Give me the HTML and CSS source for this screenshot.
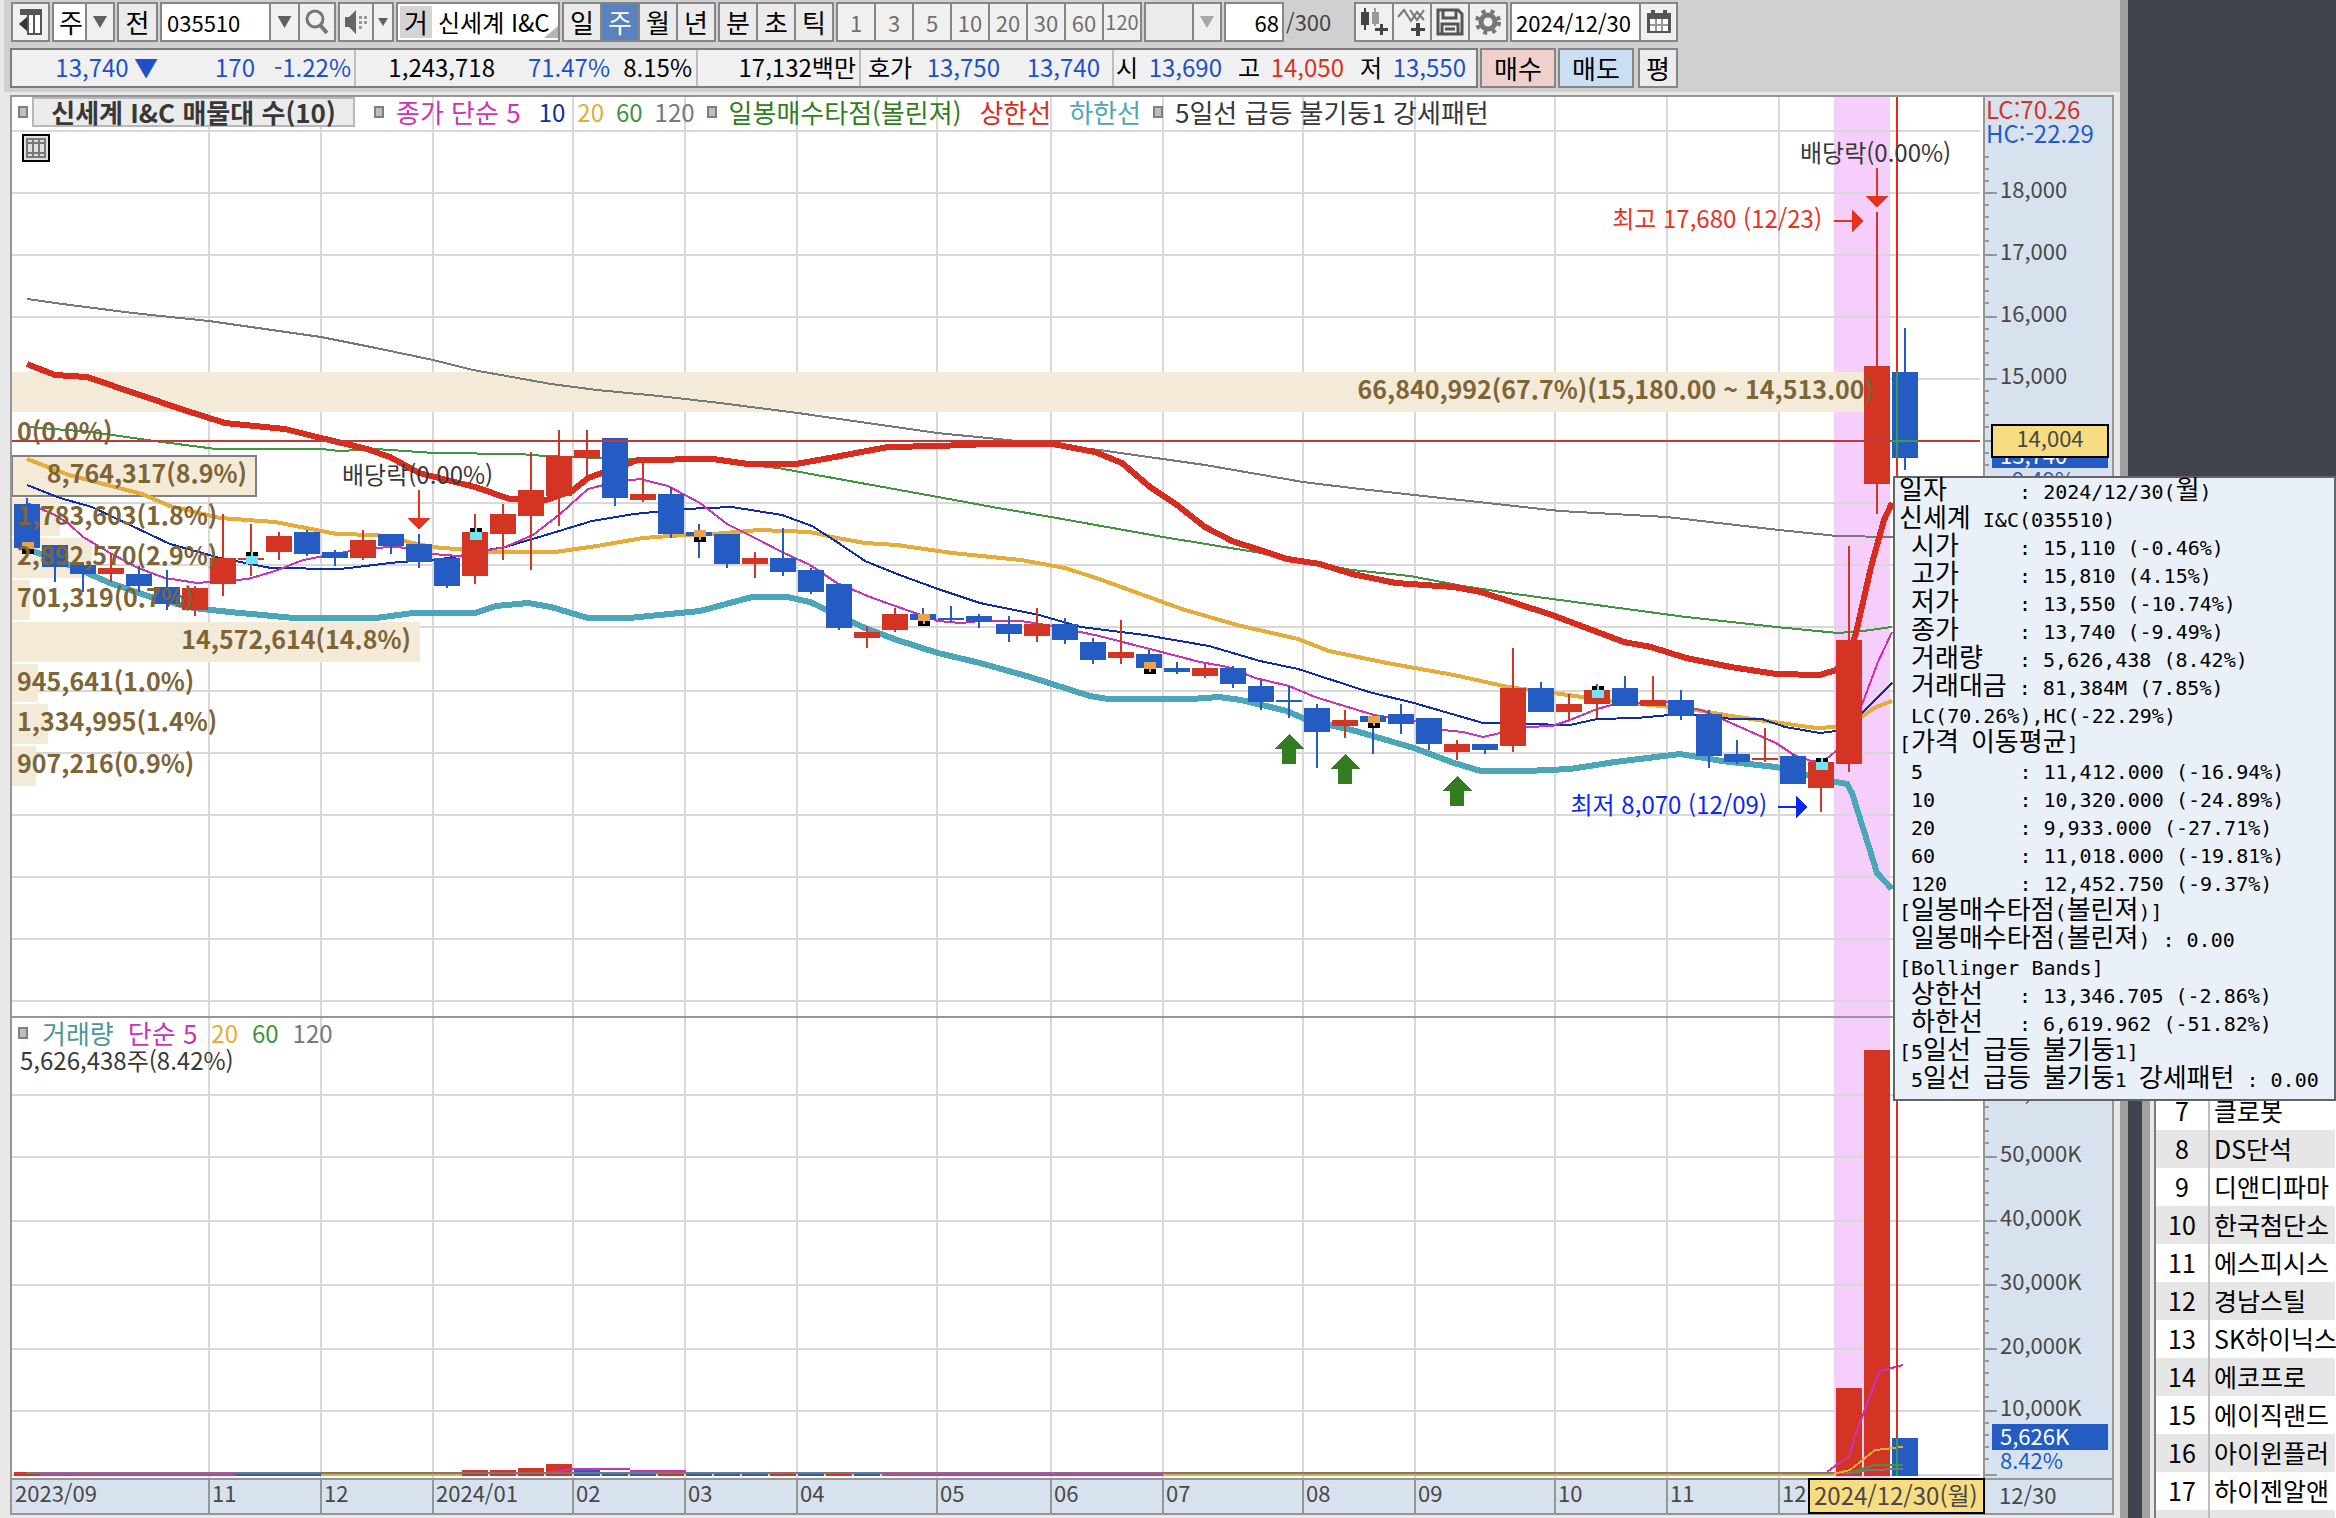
FILE: index.html
```html
<!DOCTYPE html>
<html lang="ko">
<head>
    <meta charset="UTF-8">
    <meta name="viewport" content="width=device-width, initial-scale=1.0">
    <title>신세계 I&amp;C 주봉 차트</title>
    <link rel="stylesheet" href="styles.css">
</head>
<body>
    <div class="desktop">
        <main class="window">
            <div class="toolbar">
                <div class="group w-icon">
                    <button type="button" aria-label="패널 접기">
                        <svg width="26" height="28" viewBox="0 0 26 28"><path d="M2 1h22v26H9V7H2z" fill="#555"/><path d="M11 7h4v18h-4zM17 7h5v18h-5z" fill="#fff"/><path d="M9 9v14L1 16z" fill="#333"/></svg>
                    </button>
                </div>
                <div class="group w-period">
                    <select class="period" aria-label="주기"><option>주</option></select>
                    <span class="arrow"></span>
                </div>
                <div class="group w-prev"><button type="button" class="flat">전</button></div>
                <div class="group w-code">
                    <input class="code" type="text" value="035510" aria-label="종목코드">
                    <button type="button" class="drop" aria-label="종목 목록"><span class="arrow"></span></button>
                    <button type="button" aria-label="종목 검색">
                        <svg width="26" height="26" viewBox="0 0 26 26" fill="none" stroke="#777"><circle cx="11" cy="10" r="8" stroke-width="3"/><path d="M16 16l7 8" stroke-width="4"/></svg>
                    </button>
                </div>
                <div class="group w-sound">
                    <button type="button" aria-label="소리">
                        <svg width="26" height="26" viewBox="0 0 26 26" fill="#666"><path d="M2 8h4l7-7v24l-7-7H2z"/><path d="M16 7h3v3h-3zM21 7h3v3h-3zM16 12h3v3h-3zM21 12h3v3h-3zM16 17h3v3h-3z" fill="#999"/></svg>
                    </button>
                    <button type="button" class="mini" aria-label="소리 설정"><span class="arrow small"></span></button>
                </div>
                <div class="group w-name">
                    <span class="market">거</span>
                    <span class="name">신세계 I&amp;C</span>
                </div>
                <div class="group w-four">
                    <button type="button" class="flat">일</button>
                    <button type="button" class="flat active">주</button>
                    <button type="button" class="flat">월</button>
                    <button type="button" class="flat">년</button>
                </div>
                <div class="group w-three">
                    <button type="button" class="flat">분</button>
                    <button type="button" class="flat">초</button>
                    <button type="button" class="flat">틱</button>
                </div>
                <div class="group w-minutes">
                    <button type="button" disabled>1</button>
                    <button type="button" disabled>3</button>
                    <button type="button" disabled>5</button>
                    <button type="button" disabled>10</button>
                    <button type="button" disabled>20</button>
                    <button type="button" disabled>30</button>
                    <button type="button" disabled>60</button>
                    <button type="button" disabled>120</button>
                </div>
                <div class="group w-custom">
                    <select class="custom" aria-label="사용자 주기" disabled><option></option></select>
                    <span class="arrow dim"></span>
                </div>
                <div class="group w-count"><input class="count" type="text" value="68" aria-label="표시 봉 개수"></div>
                <span class="total">/300</span>
                <div class="group w-four">
                    <button type="button" aria-label="차트 추가">
                        <svg width="32" height="30" viewBox="0 0 32 30" fill="#444"><path d="M3 5h8v13H3zM6 1h2v22H6z"/><path d="M14 5h7v12h-7zM16 1h2v18h-2z" fill="#999"/><path d="M22 17h3v4h5v3h-5v4h-3v-4h-5v-3h5z"/></svg>
                    </button>
                    <button type="button" aria-label="지표 추가">
                        <svg width="32" height="30" viewBox="0 0 32 30" fill="#444"><path d="M2 10l6-7 7 11 6-9 7 8M14 3l7 10 7-10" fill="none" stroke="#777" stroke-width="2"/><path d="M20 16h4v5h5v3h-5v5h-4v-5h-5v-3h5z"/></svg>
                    </button>
                    <button type="button" aria-label="저장">
                        <svg width="28" height="28" viewBox="0 0 28 28" fill="none" stroke="#555" stroke-width="3"><path d="M2 2h20l4 4v20H2z"/><path d="M7 2v8h13V2M6 26V16h16v10M9 21h10"/></svg>
                    </button>
                    <button type="button" aria-label="설정">
                        <svg width="28" height="28" viewBox="0 0 28 28" fill="none" stroke="#777"><circle cx="14" cy="14" r="7" stroke-width="5"/><circle cx="14" cy="14" r="11" stroke-width="4" stroke-dasharray="4 5"/></svg>
                    </button>
                </div>
                <div class="group w-date">
                    <input class="date" type="text" value="2024/12/30" aria-label="기준일">
                    <button type="button" aria-label="달력">
                        <svg width="26" height="24" viewBox="0 0 26 24"><path d="M1 3h24v20H1z" fill="#555"/><path d="M4 9h18v12H4z" fill="#fff"/><path d="M10 9v12M16 9v12M4 15h18" stroke="#999" stroke-width="2"/><path d="M5 0h4v4H5zM17 0h4v4h-4z" fill="#555"/></svg>
                    </button>
                </div>
            </div>

            <div class="quote">
                <div class="quote-box">
                    <div class="cell c-price down"><span>13,740 ▼</span><span>170</span><span>-1.22%</span></div>
                    <div class="cell c-volume"><span>1,243,718</span><span class="down">71.47%</span><span>8.15%</span></div>
                    <div class="cell c-amount"><span>17,132백만</span></div>
                    <div class="cell c-bid"><b>호가</b><span class="down">13,750</span><span class="down">13,740</span></div>
                    <div class="cell c-ohl"><b>시</b><span class="down">13,690</span><b>고</b><span class="up">14,050</span><b>저</b><span class="down">13,550</span></div>
                </div>
                <button type="button" class="order buy">매수</button>
                <button type="button" class="order sell">매도</button>
                <button type="button" class="order avg">평</button>
            </div>

            <section class="chart">
                <div class="pane price-pane">
                    <svg id="price" viewBox="12 97 1971 919" preserveAspectRatio="none"></svg>
                    <div class="legend">
                        <i></i><strong>신세계 I&amp;C 매물대 수(10)</strong>
                        <i></i><span class="ma5">종가 단순 5</span><span class="ma10">10</span><span class="ma20">20</span><span class="ma60">60</span><span class="ma120">120</span>
                        <i></i><span class="signal">일봉매수타점(볼린져)</span><span class="upper">상한선</span><span class="lower">하한선</span>
                        <i></i><span>5일선 급등 불기둥1 강세패턴</span>
                    </div>
                    <button type="button" class="grid-toggle" aria-label="데이터 표">
                        <svg width="20" height="20" viewBox="0 0 20 20" fill="none" stroke="#777" stroke-width="2"><path d="M1 1h18v18H1zM1 5h18M1 15h18M7 1v18M13 1v18"/></svg>
                    </button>
                </div>
                <svg id="priceAxis" class="axis" viewBox="1985 97 127 919" preserveAspectRatio="none"></svg>

                <div class="pane volume-pane">
                    <svg id="volume" viewBox="12 1018 1971 460" preserveAspectRatio="none"></svg>
                    <div class="legend volume-legend">
                        <i></i><span class="vol">거래량</span><span class="ma5">단순 5</span><span class="ma20">20</span><span class="ma60">60</span><span class="ma120">120</span>
                    </div>
                    <div class="volume-now">5,626,438주(8.42%)</div>
                </div>
                <svg id="volumeAxis" class="axis" viewBox="1985 1018 127 460" preserveAspectRatio="none"></svg>

                <div class="pane time-pane">
                    <svg id="time" viewBox="12 1480 1971 33" preserveAspectRatio="none"></svg>
                    <div class="time-now">2024/12/30(월)</div>
                </div>
                <div class="axis time-end">12/30</div>
            </section>
        </main>

        <aside class="side">
            <div class="list">
                <table>
                    <tbody>
                        <tr><td>7</td><td>클로봇</td></tr>
                        <tr><td>8</td><td>DS단석</td></tr>
                        <tr><td>9</td><td>디앤디파마</td></tr>
                        <tr><td>10</td><td>한국첨단소</td></tr>
                        <tr><td>11</td><td>에스피시스</td></tr>
                        <tr><td>12</td><td>경남스틸</td></tr>
                        <tr><td>13</td><td>SK하이닉스</td></tr>
                        <tr><td>14</td><td>에코프로</td></tr>
                        <tr><td>15</td><td>에이직랜드</td></tr>
                        <tr><td>16</td><td>아이윈플러</td></tr>
                        <tr><td>17</td><td>하이젠알앤</td></tr>
                        <tr class="last"><td></td><td></td></tr>
                    </tbody>
                </table>
            </div>
        </aside>

        <div class="tooltip"><p><b>일자</b>      : 2024/12/30(<b>월</b>)</p>
<p><b>신세계</b> I&amp;C(035510)</p>
<p> <b>시가</b>     : 15,110 (-0.46%)</p>
<p> <b>고가</b>     : 15,810 (4.15%)</p>
<p> <b>저가</b>     : 13,550 (-10.74%)</p>
<p> <b>종가</b>     : 13,740 (-9.49%)</p>
<p> <b>거래량</b>   : 5,626,438 (8.42%)</p>
<p> <b>거래대금</b> : 81,384M (7.85%)</p>
<p> LC(70.26%),HC(-22.29%)</p>
<p>[<b>가격</b> <b>이동평균</b>]</p>
<p> 5        : 11,412.000 (-16.94%)</p>
<p> 10       : 10,320.000 (-24.89%)</p>
<p> 20       : 9,933.000 (-27.71%)</p>
<p> 60       : 11,018.000 (-19.81%)</p>
<p> 120      : 12,452.750 (-9.37%)</p>
<p>[<b>일봉매수타점</b>(<b>볼린져</b>)]</p>
<p> <b>일봉매수타점</b>(<b>볼린져</b>) : 0.00</p>
<p>[Bollinger Bands]</p>
<p> <b>상한선</b>   : 13,346.705 (-2.86%)</p>
<p> <b>하한선</b>   : 6,619.962 (-51.82%)</p>
<p>[5<b>일선</b> <b>급등</b> <b>불기둥</b>1]</p>
<p> 5<b>일선</b> <b>급등</b> <b>불기둥</b>1 <b>강세패턴</b> : 0.00</p></div>
    </div>
    <script src="chart.js"></script>
</body>
</html>
```
FILE: styles.css
```css
* {
    box-sizing: border-box;
}
body {
    margin: 0;
    font-family: "Noto Sans CJK KR", sans-serif;
    font-size: 26px;
    line-height: 28px;
    color: #000;
    background-color: #42444c;
}
button, input, select {
    font: inherit;
    color: inherit;
    margin: 0;
    padding: 0;
    border: 0;
    border-radius: 0;
}
svg {
    display: block;
}
.desktop {
    position: relative;
    display: flex;
    height: 100vh;
    overflow: hidden;
}
.window {
    flex: 1;
    min-width: 0;
    display: flex;
    flex-direction: column;
    padding: 0 6px 3px 0;
    background-color: #e8e8e8;
    border-right: 8px solid #a0a0a0;
}

/* toolbar */
.toolbar {
    display: flex;
    gap: 2px;
    margin: 0 -6px 0 4px;
    padding: 2px 0 0 7px;
    height: 46px;
    background-color: #d0d0d0;
}
.group {
    position: relative;
    display: flex;
    flex: none;
    height: 40px;
    border: 2px solid #868686;
    background-color: #fff;
}
.group button {
    flex: 1 1 0;
    min-width: 0;
    display: flex;
    align-items: center;
    justify-content: center;
    white-space: nowrap;
    background-color: #f0f0f0;
}
.group > * + * {
    border-left: 2px solid #868686;
}
.group .flat {
    background-color: #ebebeb;
}
.group .active {
    background-color: #5a82be;
    color: #fff;
}
.group button:disabled {
    color: #707070;
    font-size: 22px;
}
.group button:disabled:last-child {
    font-size: 20px;
}
.group input {
    min-width: 0;
    background-color: #fff;
}
.group .drop {
    flex: 0 0 29px;
}
.group .mini {
    flex: 0 0 20px;
}
.arrow {
    width: 14px;
    height: 12px;
    background-color: #606060;
    clip-path: polygon(0 0, 100% 0, 50% 100%);
}
.arrow.small {
    width: 10px;
    height: 8px;
}
.arrow.dim {
    background-color: #a8a8a8;
}
.group > .arrow {
    position: absolute;
    right: 6px;
    top: 12px;
    border: 0;
    pointer-events: none;
}
.period, .custom {
    appearance: none;
    width: 100%;
    padding-left: 5px;
    opacity: 1;
    background: linear-gradient(#868686, #868686) right 26px top / 2px 100% no-repeat, linear-gradient(#f0f0f0, #f0f0f0) right / 26px 100% no-repeat, #fff;
}
.custom {
    background-color: #ebebeb;
}
.w-icon { width: 39px; }
.w-period { width: 63px; }
.w-prev { width: 41px; }
.w-code { width: 176px; }
.w-sound { width: 56px; }
.w-name { width: 164px; }
.w-four { width: 154px; }
.w-three { width: 116px; }
.w-minutes { width: 306px; }
.w-custom { width: 78px; }
.w-count { width: 60px; }
.w-date { width: 168px; }
.code, .count, .date {
    font-size: 22px;
}
.code {
    width: 107px;
    padding-left: 5px;
}
.count {
    width: 100%;
    text-align: right;
    padding-right: 3px;
}
.date {
    width: 127px;
    padding-left: 4px;
}
.total {
    width: 66px;
    font-size: 22px;
    line-height: 38px;
    color: #444;
}
.market {
    margin: 2px;
    width: 32px;
    line-height: 32px;
    text-align: center;
    background-color: #d4d4d4;
}
.group > .name {
    border: 0;
    padding-left: 4px;
    font-size: 24px;
    line-height: 36px;
    white-space: nowrap;
}
.w-name::after {
    content: "";
    position: absolute;
    right: 0;
    bottom: 2px;
    border-left: 14px solid transparent;
    border-bottom: 12px solid #b4b4b4;
}

/* quote line */
.quote {
    display: flex;
    gap: 2px;
    margin: 0 -6px 0 4px;
    padding: 2px 0 0 6px;
    height: 46px;
    background-color: #d0d0d0;
}
.quote-box {
    display: flex;
    width: 1468px;
    height: 40px;
    border: 2px solid #7c7c7c;
    background-color: #f0f0f0;
    font-size: 24px;
    line-height: 34px;
}
.cell {
    display: grid;
    align-items: start;
    text-align: right;
    white-space: nowrap;
    border-right: 2px solid #bebebe;
}
.cell b {
    font-weight: normal;
    text-align: left;
}
.c-price { grid-template-columns: 146px 97px 96px; width: 344px; }
.c-volume { grid-template-columns: 139px 115px 82px; width: 342px; }
.c-amount { grid-template-columns: 158px; width: 163px; }
.c-bid { grid-template-columns: 52px 80px 100px; padding-left: 7px; width: 253px; }
.c-ohl { grid-template-columns: 24px 82px 40px 82px 40px 82px; padding-left: 2px; flex: 1; border: 0; }
.c-ohl b + span + b { padding-left: 16px; }
.down { color: #1e50c8; }
.up { color: #d83224; }
.order {
    width: 76px;
    height: 40px;
    border: 2px solid #868686;
}
.buy { background-color: #f0d0cd; }
.sell { background-color: #cbdff4; }
.avg { width: 40px; margin-left: 2px; background-color: #ebebeb; }

/* chart */
.chart {
    flex: 1;
    min-height: 0;
    display: grid;
    grid-template-columns: 1fr 129px;
    grid-template-rows: 919fr 462fr 35px;
    margin: 3px 0 0 10px;
    border: 2px solid #969696;
    background-color: #fff;
}
.chart text {
    font-size: 22px;
}
.chart .label {
    font-size: 24px;
}
.chart .profile-text {
    font-size: 25px;
    font-weight: bold;
}
.pane {
    position: relative;
    min-width: 0;
    min-height: 0;
}
.pane > svg {
    width: 100%;
    height: 100%;
}
.axis {
    width: 100%;
    height: 100%;
    min-height: 0;
    background-color: #d8e2ee;
    border-left: 2px solid #969696;
}
.volume-pane, #volumeAxis {
    border-top: 2px solid #969696;
}
.time-pane, .time-end {
    border-top: 2px solid #969696;
    background-color: #d8e2ee;
    color: #484848;
}
.time-end {
    padding-left: 14px;
    font-size: 22px;
}
.legend {
    position: absolute;
    left: 6px;
    top: 0;
    display: flex;
    align-items: center;
    gap: 12px;
    height: 30px;
    color: #383838;
    white-space: nowrap;
}
.legend i {
    width: 10px;
    height: 12px;
    border: 2px solid #808080;
    background-color: #bebebe;
}
.legend strong {
    width: 323px;
    height: 30px;
    margin-left: -8px;
    margin-right: 7px;
    line-height: 25px;
    text-align: center;
    border: 2px solid #b8b8b8;
    background-color: #ebebeb;
}
.legend .ma10, .legend .upper, .legend .lower {
    margin-left: 6px;
}
.legend .ma10, .legend .ma20, .legend .ma60, .legend .ma120 {
    font-size: 24px;
}
.volume-legend {
    gap: 14px;
}
.volume-now {
    position: absolute;
    left: 8px;
    top: 28px;
    font-size: 24px;
    color: #383838;
}
.ma5 { color: #cc33b4; }
.ma10 { color: #0f2ca8; }
.ma20 { color: #e6ac3a; }
.ma60 { color: #419440; }
.ma120 { color: #787878; }
.signal { color: #347c20; }
.upper { color: #d82c1e; }
.lower { color: #4ca6ba; }
.vol { color: #4c9696; }
.grid-toggle {
    position: absolute;
    left: 10px;
    top: 37px;
    width: 28px;
    height: 28px;
    display: flex;
    align-items: center;
    justify-content: center;
    border: 2px solid #000;
    background-color: #e0e0e0;
}
.time-now {
    position: absolute;
    right: -2px;
    top: -2px;
    width: 177px;
    height: 36px;
    padding-left: 4px;
    font-size: 24px;
    line-height: 30px;
    border: 2px solid #000;
    background-color: #f8dc82;
    white-space: nowrap;
}

/* side list */
.side {
    width: 208px;
    display: flex;
    flex-direction: column;
    justify-content: flex-end;
    padding-left: 14px;
    overflow: hidden;
}
.list {
    border-left: 8px solid #a0a0a0;
    padding-left: 4px;
    background-color: #e8e8e8;
}
.list table {
    width: 100%;
    border-collapse: collapse;
    table-layout: fixed;
    background-color: #fff;
    border-left: 2px solid #7c7c7c;
}
.list td {
    height: 38px;
    padding: 0 0 2px;
    font-size: 25px;
    white-space: nowrap;
}
.list td:first-child {
    width: 54px;
    text-align: center;
    border-right: 2px solid #bebebe;
}
.list td:last-child {
    padding-left: 4px;
}
.list tr:nth-child(even) {
    background-color: #e6e6e6;
}
.list .last td {
    height: 8px;
}

/* data tooltip */
.tooltip {
    position: absolute;
    right: 0;
    top: 476px;
    width: 443px;
    padding: 0 0 5px 4px;
    border: 2px solid #646464;
    background-color: #e9f0f8;
    font-family: "DejaVu Sans Mono", "Noto Sans CJK KR", monospace;
    font-size: 20px;
    line-height: 28px;
}
.tooltip p {
    height: 28px;
    margin: 0;
    white-space: pre;
}
.tooltip b {
    font-family: "Noto Sans CJK KR", sans-serif;
    font-size: 26px;
    font-weight: normal;
    line-height: 20px;
}
```
FILE: chart.js
```js
const RED = '#d43424';
const BLUE = '#245cc4';
const GRID = '#d8d8d8';

// r/b, high, body top, body bottom, low
const candles = [
    ['b', 498, 504, 548, 548], ['b', 545, 545, 567, 582], ['b', 562, 565, 574, 592], ['r', 553, 568, 574, 582],
    ['b', 566, 574, 586, 592], ['b', 570, 587, 604, 610], ['r', 586, 588, 610, 616], ['r', 514, 558, 584, 596],
    ['r', 524, 558, 560, 576], ['r', 532, 536, 552, 560], ['b', 530, 532, 554, 556], ['b', 550, 552, 558, 566],
    ['r', 530, 540, 558, 560], ['b', 534, 534, 546, 554], ['b', 534, 544, 562, 568], ['b', 558, 558, 586, 588],
    ['r', 514, 532, 576, 584], ['r', 504, 514, 534, 560], ['r', 452, 490, 516, 570], ['r', 430, 456, 496, 526],
    ['r', 430, 450, 458, 475], ['b', 438, 438, 498, 506], ['r', 458, 494, 500, 502], ['b', 487, 494, 534, 538],
    ['b', 524, 532, 536, 558], ['b', 534, 534, 564, 568], ['r', 552, 558, 564, 578], ['b', 528, 558, 572, 576],
    ['b', 568, 570, 592, 594], ['b', 584, 584, 628, 630], ['r', 626, 632, 638, 648], ['r', 608, 614, 630, 632],
    ['b', 608, 614, 620, 625], ['b', 606, 618, 620, 622], ['b', 614, 616, 622, 628], ['b', 616, 624, 634, 642],
    ['r', 608, 624, 636, 642], ['b', 618, 624, 640, 644], ['b', 638, 642, 660, 664], ['r', 620, 652, 658, 664],
    ['b', 650, 654, 668, 672], ['b', 662, 668, 672, 674], ['r', 664, 668, 676, 678], ['b', 666, 668, 684, 688],
    ['b', 680, 686, 702, 710], ['b', 686, 700, 702, 718], ['b', 704, 708, 732, 768], ['r', 710, 720, 726, 738],
    ['b', 716, 716, 722, 754], ['b', 704, 714, 724, 734], ['b', 718, 718, 744, 750], ['r', 740, 744, 752, 760],
    ['b', 744, 744, 750, 754], ['r', 648, 688, 746, 752], ['b', 682, 688, 712, 712], ['r', 694, 704, 712, 720],
    ['r', 684, 690, 704, 718], ['b', 676, 688, 706, 706], ['r', 676, 700, 706, 706], ['b', 690, 700, 716, 720],
    ['b', 710, 714, 756, 768], ['b', 740, 754, 762, 764], ['r', 728, 758, 760, 762], ['b', 754, 756, 784, 784],
    ['r', 760, 762, 788, 812], ['r', 546, 640, 764, 772], ['r', 212, 366, 484, 514], ['b', 328, 372, 458, 470]
];

const lines = [
    ['#787878', 2, '27,299 70,305 133,313 161,316 209,321 321,337 376,348 433,360 473,370 551,384 597,390 659,396 720,403 798,413 937,433 998,439 1099,450 1163,459 1205,465 1303,482 1360,489 1460,500 1560,511 1667,517 1779,530 1837,536 1893,537'],
    ['#419440', 2, '27,427 92,432 147,440 216,449 321,449 340,451 376,449 434,453 519,454 546,456 600,458 713,461 778,468 938,497 998,508 1051,517 1163,537 1255,552 1352,570 1410,576 1463,586 1508,593 1619,608 1686,617 1776,627 1838,633 1863,631 1892,627'],
    ['#e6ac3a', 4, '27,459 69,475 142,494 170,506 220,518 275,522 337,534 376,535 432,547 491,552 555,552 597,546 643,538 684,535 713,534 759,530 810,532 837,538 865,543 897,545 952,553 1021,560 1065,568 1099,579 1182,609 1237,625 1298,639 1329,651 1387,663 1454,675 1508,687 1561,694 1610,701 1651,705 1691,709 1731,716 1780,723 1816,728 1836,727 1863,716 1874,708 1892,701'],
    ['#0f2ca8', 2, '27,485 60,498 92,507 170,544 220,558 271,568 340,569 399,562 436,560 459,556 487,550 505,547 546,535 592,521 634,514 684,509 732,507 782,515 812,526 837,542 865,561 897,574 938,589 980,603 1039,615 1081,627 1145,635 1209,646 1260,661 1298,669 1369,692 1414,703 1483,723 1570,725 1597,719 1637,718 1669,715 1704,715 1731,719 1762,719 1785,727 1820,733 1836,731 1863,712 1892,683'],
    ['#cc33b4', 2, '27,503 55,515 69,524 83,537 110,553 138,568 165,578 197,583 248,579 275,571 303,560 340,553 367,548 399,547 432,554 459,556 505,547 533,535 560,514 588,489 615,482 640,479 668,486 700,503 727,524 755,538 782,552 810,565 837,583 870,597 915,613 938,621 961,623 980,621 1021,621 1053,626 1099,636 1150,649 1200,662 1228,667 1255,678 1289,686 1315,697 1374,715 1419,722 1443,730 1463,732 1483,737 1526,727 1552,726 1570,720 1597,709 1619,703 1669,702 1704,711 1731,723 1776,743 1794,755 1811,761 1825,760 1836,751 1863,702 1878,662 1892,632'],
    ['#4ca6ba', 6, '27,549 60,561 110,583 151,597 193,608 230,612 294,618 376,618 413,613 475,613 496,606 528,603 551,607 588,618 629,618 700,611 752,597 787,597 810,602 837,615 865,628 897,640 938,653 980,663 1030,677 1090,696 1108,699 1191,699 1219,697 1241,700 1287,711 1307,720 1352,730 1414,748 1454,763 1481,771 1526,771 1570,769 1615,762 1680,754 1722,761 1776,767 1807,775 1836,782 1847,784 1852,793 1869,847 1877,873 1892,889'],
    ['#d82c1e', 6, '27,364 55,375 87,377 184,410 225,423 285,429 321,438 367,449 390,457 419,473 475,487 510,499 546,500 572,491 588,478 638,460 713,459 748,464 796,464 824,459 856,453 888,447 938,446 989,444 1053,444 1095,452 1122,463 1150,487 1177,505 1205,527 1232,541 1260,550 1287,559 1320,564 1352,574 1396,583 1454,587 1481,592 1552,615 1624,642 1651,647 1686,658 1731,667 1776,674 1820,675 1836,670 1849,655 1856,633 1871,567 1884,520 1892,503']
];

// volume by price: y, height, right edge, label, label x
const profile = [
    [372, 40, 1866, '66,840,992(67.7%)(15,180.00 ~ 14,513.00)', 1874, 'end'],
    [414, 0, 12, '0(0.0%)', 17],
    [456, 40, 256, '8,764,317(8.9%)', 247, 'end'],
    [498, 38, 60, '1,783,603(1.8%)', 17],
    [538, 40, 92, '2,892,570(2.9%)', 17],
    [580, 40, 30, '701,319(0.7%)', 17],
    [622, 40, 420, '14,572,614(14.8%)', 411, 'end'],
    [664, 38, 38, '945,641(1.0%)', 17],
    [704, 40, 48, '1,334,995(1.4%)', 17],
    [746, 40, 36, '907,216(0.9%)', 17]
];

const gridX = [209, 321, 433, 573, 685, 797, 937, 1051, 1163, 1303, 1415, 1555, 1667, 1779];
const priceGrid = [131, 193, 255, 317, 379, 441, 503, 565, 627, 691, 753, 815, 877, 939, 1001];
const volumeGrid = [1095, 1157, 1221, 1285, 1349, 1411, 1475];

// bar height per week, the others are flat
const volumeBars = { 0: 4, 16: 6, 17: 6, 18: 8, 19: 12, 20: 6, 65: 88, 66: 426, 67: 38 };
const risingVolume = [0, 16, 17, 18, 19, 23, 27, 29, 65, 66];

const candleX = i => 27 + 28 * i + (i > 34 ? 2 : 0);
const rect = (x, y, w, h, fill, extra = '') => `<rect x="${x}" y="${y}" width="${w}" height="${h}" fill="${fill}" ${extra}/>`;
const poly = (points, fill) => `<polygon points="${points}" fill="${fill}"/>`;
const path = (points, color, width) => `<polyline points="${points}" fill="none" stroke="${color}" stroke-width="${width}"/>`;
const text = (x, y, str, fill, anchor = 'start', cls = 'number') => `<text x="${x}" y="${y + (cls === 'number' ? 8 : 9)}" fill="${fill}" text-anchor="${anchor}" class="${cls}">${str}</text>`;
const put = (id, html) => {
    const svg = document.getElementById(id);
    svg.setAttribute('shape-rendering', 'crispEdges');
    svg.innerHTML = html;
};

function drawGrid(rows, top, height) {
    let html = rect(1834, top, 56, height, '#f5cefc');
    gridX.forEach(x => html += rect(x - 1, top, 2, height, GRID));
    rows.forEach(y => html += rect(12, y - 1, 1968, 2, GRID));
    return html;
}

function drawPrice() {
    let html = drawGrid(priceGrid, 97, 919);
    profile.forEach(([y, h, right], i) => {
        const border = i === 2 ? 'stroke="#808080" stroke-width="2"' : '';
        html += rect(12, y, right - 12, h, '#f3ead8', border);
    });
    lines.forEach(([color, width, points]) => html += path(points, color, width));
    candles.forEach(([type, high, top, bottom, low], i) => {
        const x = candleX(i);
        const color = type === 'r' ? RED : BLUE;
        html += rect(x - 1, high, 2, low - high, color);
        html += rect(x - 13, top, 26, bottom - top, color);
    });

    // pattern markers
    [[0, 542], [24, 530], [32, 614], [40, 662], [48, 716]].forEach(([i, y]) => {
        html += rect(candleX(i) - 5, y + 6, 12, 6, '#000') + rect(candleX(i) - 5, y, 12, 7, '#e6a54a') + rect(candleX(i), y + 6, 2, 4, '#e6a54a');
    });
    [[8, 556], [16, 532], [56, 690], [64, 762]].forEach(([i, y]) => {
        html += rect(candleX(i) - 5, y - 4, 12, 8, '#000') + rect(candleX(i) - 5, y, 12, 8, '#6ee4f4') + rect(candleX(i), y - 4, 2, 4, '#6ee4f4');
    });
    [[1289, 734], [1345, 754], [1457, 776]].forEach(([x, y]) => {
        html += poly(`${x},${y} ${x + 15},${y + 15} ${x + 7},${y + 15} ${x + 7},${y + 30} ${x - 7},${y + 30} ${x - 7},${y + 15} ${x - 15},${y + 15}`, '#347c20');
    });

    profile.forEach(([y, , , label, x, anchor]) => html += text(x, y + 18, label, '#7d6538', anchor, 'profile-text'));

    // crosshair
    html += rect(12, 440, 1968, 2, '#c03a34');
    html += rect(1896, 97, 2, 919, '#e8281c');
    html += rect(1892, 440, 26, 2, '#3c9c46') + rect(1896, 372, 2, 86, '#3c9c46');

    // dividend marks
    [[342, 475, 419, 490], [1800, 153, 1877, 168]].forEach(([tx, ty, x, y]) => {
        html += text(tx, ty, '배당락(0.00%)', '#383838', 'start', 'label');
        html += rect(x - 1, y, 2, 28, '#e8321e') + poly(`${x - 11},${y + 28} ${x + 11},${y + 28} ${x},${y + 40}`, '#e8321e');
    });
    html += text(1822, 219, '최고 17,680 (12/23)', '#e8321e', 'end', 'label');
    html += rect(1834, 220, 18, 2, '#e8321e') + poly('1852,210 1864,221 1852,232', '#e8321e');
    html += text(1767, 805, '최저 8,070 (12/09)', '#0a28f0', 'end', 'label');
    html += rect(1778, 806, 18, 2, '#0a28f0') + poly('1796,796 1808,807 1796,818', '#0a28f0');
    put('price', html);
}

function drawTicks(rows, step) {
    let html = '';
    rows.forEach(y => {
        html += rect(1985, y - 1, 12, 2, '#969696');
        for (let n = 1; n < 5; n++) {
            html += rect(1985, y - 1 + n * step, 4, 2, '#969696');
        }
    });
    return html;
}

function drawPriceAxis() {
    let html = drawTicks(priceGrid.slice(1), 12);
    html += rect(1985, 156, 4, 2, '#969696') + rect(1985, 168, 4, 2, '#969696') + rect(1985, 180, 4, 2, '#969696');
    html += text(1986, 110, 'LC:70.26', RED, 'start', 'label') + text(1986, 134, 'HC:-22.29', BLUE, 'start', 'label');
    ['18,000', '17,000', '16,000', '15,000'].forEach((label, i) => html += text(2000, 190 + 62 * i, label, '#484848'));
    html += rect(1992, 444, 116, 24, BLUE) + text(2000, 456, '13,740', '#fff') + text(2012, 480, '9.49%', BLUE);
    html += rect(1992, 425, 116, 32, '#f8dc82', 'stroke="#000" stroke-width="2"') + text(2050, 439, '14,004', '#484848', 'middle');
    put('priceAxis', html);
}

function drawVolume() {
    let html = drawGrid(volumeGrid, 1018, 460);
    html += path('26,1475 236,1475', '#cc33b4', 2) + path('236,1475 321,1475', BLUE, 2) + path('321,1475 488,1475', '#e6ac3a', 2);
    html += path('882,1475 1163,1475', '#cc33b4', 2) + path('1163,1475 1834,1475', '#e6ac3a', 2);
    candles.forEach((candle, i) => {
        const height = volumeBars[i] || (i > 20 && i < 31 ? 2 : 0);
        html += rect(candleX(i) - 13, 1476 - height, 26, height, risingVolume.includes(i) ? RED : BLUE);
    });
    html += path('546,1473 573,1469 630,1469', '#cc33b4', 2) + path('630,1471 686,1471', '#cc33b4', 2);
    html += path('26,1473 1850,1473 1869,1470 1903,1469', '#787878', 2);
    html += path('1852,1472 1875,1465 1903,1465', '#419440', 2);
    html += path('1833,1474 1850,1470 1875,1450 1903,1447', '#e6ac3a', 2);
    html += path('1827,1472 1839,1463 1849,1457 1856,1433 1879,1372 1888,1369 1903,1365', '#cc33b4', 2);
    html += rect(1896, 1018, 2, 420, '#e8281c') + rect(1896, 1438, 2, 38, '#3c9c46');
    put('volume', html);
}

function drawVolumeAxis() {
    let html = drawTicks([1033, ...volumeGrid.slice(0, 6)], 12) + rect(1985, 1474, 12, 2, '#969696');
    ['60,000K', '50,000K', '40,000K', '30,000K', '20,000K', '10,000K'].forEach((label, i) => {
        html += text(2000, volumeGrid[i] - 3, label, '#484848');
    });
    html += rect(1992, 1424, 116, 26, BLUE) + text(2000, 1437, '5,626K', '#fff') + text(2000, 1461, '8.42%', BLUE);
    put('volumeAxis', html);
}

function drawTime() {
    const months = ['11', '12', '2024/01', '02', '03', '04', '05', '06', '07', '08', '09', '10', '11', '12'];
    let html = text(15, 1494, '2023/09', '#484848');
    gridX.forEach((x, i) => {
        html += rect(x - 1, 1480, 2, 33, '#969696') + text(x + 3, 1494, months[i], '#484848');
    });
    put('time', html);
}

drawPrice();
drawPriceAxis();
drawVolume();
drawVolumeAxis();
drawTime();
```
